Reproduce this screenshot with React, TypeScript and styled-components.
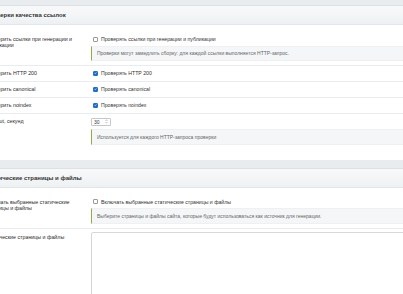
import React from "react";
import styled, { createGlobalStyle } from "styled-components";

const Global = createGlobalStyle`
  html, body { margin: 0; padding: 0; }
  body {
    background: #e9ecef;
    font-family: "Liberation Sans", Arial, sans-serif;
    color: #333;
    overflow: hidden;
    width: 403px;
    height: 294px;
  }
`;

const Page = styled.div`
  width: 520px;
  margin-left: -15px;
  padding-top: 5px;
  display: flex;
  flex-direction: column;
  gap: 8px;
`;

const Section = styled.section`
  background: #fff;
  border-top: 1px solid #dde1e5;
  display: flex;
  flex-direction: column;
`;

const Header = styled.div`
  height: 18px;
  display: flex;
  align-items: center;
  background: linear-gradient(#f8f9fa, #eef1f3);
  border-bottom: 1px solid #e3e6e9;
  font-weight: bold;
  font-size: 6px;
  color: #333;
`;

const Body = styled.div<{ $bottom?: number }>`
  padding: 6.5px 0 ${(p) => p.$bottom ?? 11}px;
  display: flex;
  flex-direction: column;
`;

const Row = styled.div<{ $last?: boolean }>`
  display: grid;
  grid-template-columns: 106px 1fr;
  padding: 4px 0;
  border-bottom: ${(p) => (p.$last ? "none" : "1px solid #e9ecee")};
`;

const Label = styled.div`
  font-size: 5.3px;
  line-height: 6.2px;
  color: #2b2b2b;
  padding-top: 0.5px;
  padding-right: 11px;
`;

const Control = styled.div`
  display: flex;
  flex-direction: column;
  gap: 3px;
`;

const CheckLine = styled.label`
  display: flex;
  align-items: center;
  gap: 3px;
  height: 7px;
  padding-left: 2px;
  font-size: 5.2px;
  color: #333;
`;

const Box = styled.span<{ $checked?: boolean }>`
  width: 5px;
  height: 5px;
  flex: none;
  box-sizing: border-box;
  border-radius: 1px;
  border: 0.6px solid ${(p) => (p.$checked ? "#1f6fd1" : "#9a9a9a")};
  background: ${(p) => (p.$checked ? "#1f6fd1" : "#fff")};
  display: flex;
  align-items: center;
  justify-content: center;
`;

const Info = styled.div<{ $h?: number }>`
  height: ${(p) => p.$h ?? 15}px;
  display: flex;
  align-items: center;
  background: #f4f6f8;
  border-left: 1px solid #8fb03e;
  border-top: 1px solid #eef0f2;
  border-bottom: 1px solid #eef0f2;
  box-sizing: border-box;
  padding-left: 5px;
  font-size: 5px;
  color: #666;
`;

const NumberInput = styled.div`
  width: 20px;
  height: 8px;
  box-sizing: border-box;
  border: 0.6px solid #c4c8cc;
  border-radius: 1px;
  display: flex;
  align-items: center;
  justify-content: space-between;
  padding: 0 2px;
  font-size: 5px;
  color: #333;
  background: #fff;
`;

const TextArea = styled.div`
  height: 80px;
  border: 1px solid #d6d9dc;
  border-radius: 2px;
  background: #fff;
  margin-top: -1px;
`;

const Check = ({ checked }: { checked?: boolean }) => (
  <Box $checked={checked}>
    {checked && (
      <svg width="4" height="4" viewBox="0 0 10 10">
        <path d="M2 5.2 L4.2 7.4 L8.2 2.8" fill="none" stroke="#fff" strokeWidth="1.8" />
      </svg>
    )}
  </Box>
);

const Spinner = () => (
  <svg width="3" height="5" viewBox="0 0 6 10">
    <path d="M1 4 L3 1.5 L5 4" fill="none" stroke="#888" strokeWidth="0.9" />
    <path d="M1 6 L3 8.5 L5 6" fill="none" stroke="#888" strokeWidth="0.9" />
  </svg>
);

export default function App() {
  return (
    <>
      <Global />
      <Page>
        <Section>
          <Header>Проверки качества ссылок</Header>
          <Body>
            <Row>
              <Label>Проверить ссылки при генерации и публикации</Label>
              <Control>
                <CheckLine>
                  <Check />
                  Проверять ссылки при генерации и публикации
                </CheckLine>
                <Info>Проверки могут замедлить сборку: для каждой ссылки выполняется HTTP-запрос.</Info>
              </Control>
            </Row>
            <Row>
              <Label>Проверить HTTP 200</Label>
              <Control>
                <CheckLine>
                  <Check checked />
                  Проверять HTTP 200
                </CheckLine>
              </Control>
            </Row>
            <Row>
              <Label>Проверить canonical</Label>
              <Control>
                <CheckLine>
                  <Check checked />
                  Проверять canonical
                </CheckLine>
              </Control>
            </Row>
            <Row>
              <Label>Проверить noindex</Label>
              <Control>
                <CheckLine>
                  <Check checked />
                  Проверять noindex
                </CheckLine>
              </Control>
            </Row>
            <Row $last>
              <Label>Timeout, секунд</Label>
              <Control>
                <NumberInput>
                  <span>30</span>
                  <Spinner />
                </NumberInput>
                <Info $h={16}>Используется для каждого HTTP-запроса проверки</Info>
              </Control>
            </Row>
          </Body>
        </Section>
        <Section>
          <Header>Статические страницы и файлы</Header>
          <Body $bottom={0}>
            <Row>
              <Label>Включать выбранные статические страницы и файлы</Label>
              <Control>
                <CheckLine>
                  <Check />
                  Включать выбранные статические страницы и файлы
                </CheckLine>
                <Info $h={16}>Выберите страницы и файлы сайта, которые будут использоваться как источник для генерации.</Info>
              </Control>
            </Row>
            <Row $last>
              <Label>Статические страницы и файлы</Label>
              <Control>
                <TextArea />
              </Control>
            </Row>
          </Body>
        </Section>
      </Page>
    </>
  );
}
